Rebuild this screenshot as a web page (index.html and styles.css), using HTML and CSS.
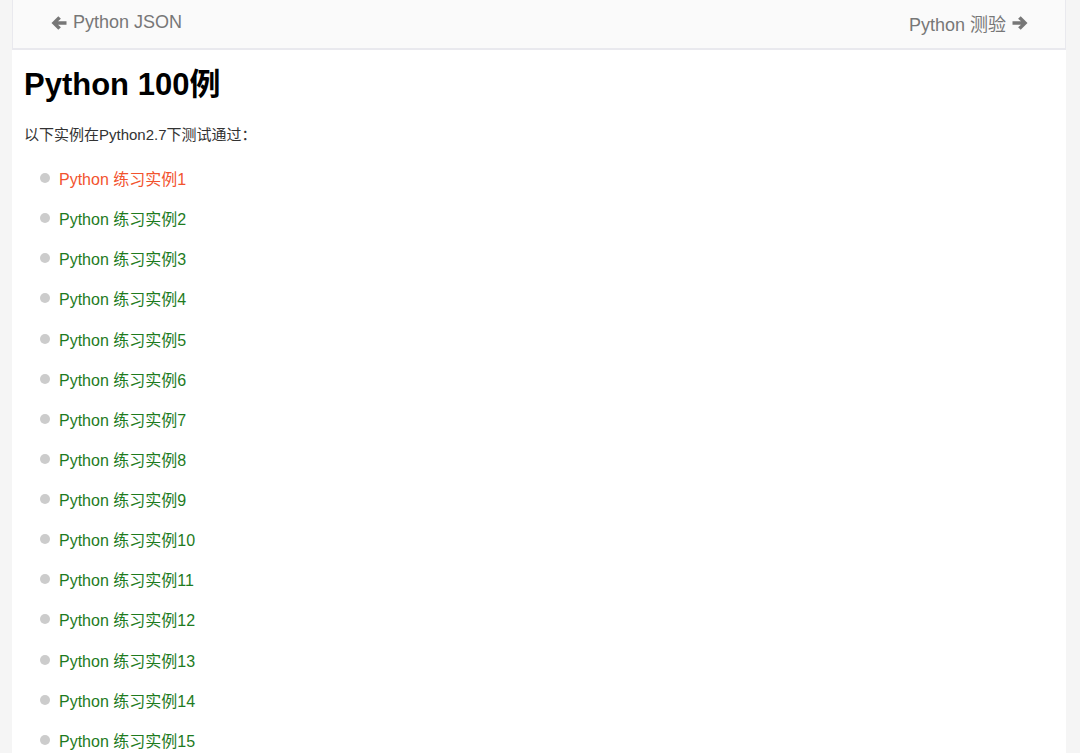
FILE: index.html
```html
<!DOCTYPE html>
<html>
<head>
    <meta charset="utf-8">
    <title>Python 100例</title>
    <link rel="stylesheet" href="styles.css">
</head>
<body>
    <div class="article">
        <div class="previous-next">
            <a class="prev" href="#">
                <svg class="arrow" viewBox="0 0 16 16" width="16" height="16"><path d="M0.5 8 L7.3 1.2 L9.9 3.8 L7 6.3 L15.5 6.3 L15.5 9.7 L7 9.7 L9.9 12.2 L7.3 14.8 Z"/></svg>
                Python JSON
            </a>
            <a class="next" href="#">
                Python 测验
                <svg class="arrow" viewBox="0 0 16 16" width="16" height="16"><path d="M15.5 8 L8.7 1.2 L6.1 3.8 L9 6.3 L0.5 6.3 L0.5 9.7 L9 9.7 L6.1 12.2 L8.7 14.8 Z"/></svg>
            </a>
        </div>
        <div class="article-body">
            <h1>Python 100例</h1>
            <p>以下实例在Python2.7下测试通过：</p>
            <ul class="examples">
                <li><a class="active" href="#">Python 练习实例1</a></li>
                <li><a href="#">Python 练习实例2</a></li>
                <li><a href="#">Python 练习实例3</a></li>
                <li><a href="#">Python 练习实例4</a></li>
                <li><a href="#">Python 练习实例5</a></li>
                <li><a href="#">Python 练习实例6</a></li>
                <li><a href="#">Python 练习实例7</a></li>
                <li><a href="#">Python 练习实例8</a></li>
                <li><a href="#">Python 练习实例9</a></li>
                <li><a href="#">Python 练习实例10</a></li>
                <li><a href="#">Python 练习实例11</a></li>
                <li><a href="#">Python 练习实例12</a></li>
                <li><a href="#">Python 练习实例13</a></li>
                <li><a href="#">Python 练习实例14</a></li>
                <li><a href="#">Python 练习实例15</a></li>
            </ul>
        </div>
    </div>
</body>
</html>
```

FILE: styles.css
```css
body {
    margin: 0;
    background: #f5f5f5;
    font-family: "Liberation Sans", Arial, "Noto Sans CJK SC", sans-serif;
    color: #333;
}
.article {
    margin: 0 14px 0 12px;
    background: #fff;
    min-height: 753px;
}
.previous-next {
    display: flex;
    justify-content: space-between;
    align-items: center;
    height: 50px;
    padding: 0 37px 3px 38px;
    box-sizing: border-box;
    background: #fafafa;
    border: 1px solid #e9e9ee;
    border-top: none;
    border-bottom-width: 2px;
}
.previous-next a {
    display: flex;
    align-items: center;
    gap: 6px;
    color: #777;
    font-size: 18px;
    text-decoration: none;
}
.arrow {
    fill: #777;
}
.article-body {
    padding: 17px 12px 0 12px;
}
h1 {
    margin: 0;
    font-size: 31px;
    line-height: 36px;
    font-weight: bold;
    color: #000;
}
p {
    margin: 20px 0 0 0;
    font-size: 15px;
    line-height: 24px;
}
.examples {
    list-style: none;
    margin: 19px 0 0 0;
    padding: 0 0 0 16px;
}
.examples li {
    display: flex;
    align-items: center;
    height: 24px;
    margin-bottom: 16.14px;
    font-size: 16px;
}
.examples li::before {
    content: "";
    width: 10px;
    height: 10px;
    border-radius: 50%;
    background: #cccccc;
    margin-right: 9px;
}
.examples a {
    color: #1e7b1e;
    text-decoration: none;
}
.examples a.active {
    color: #f2532e;
}
```
